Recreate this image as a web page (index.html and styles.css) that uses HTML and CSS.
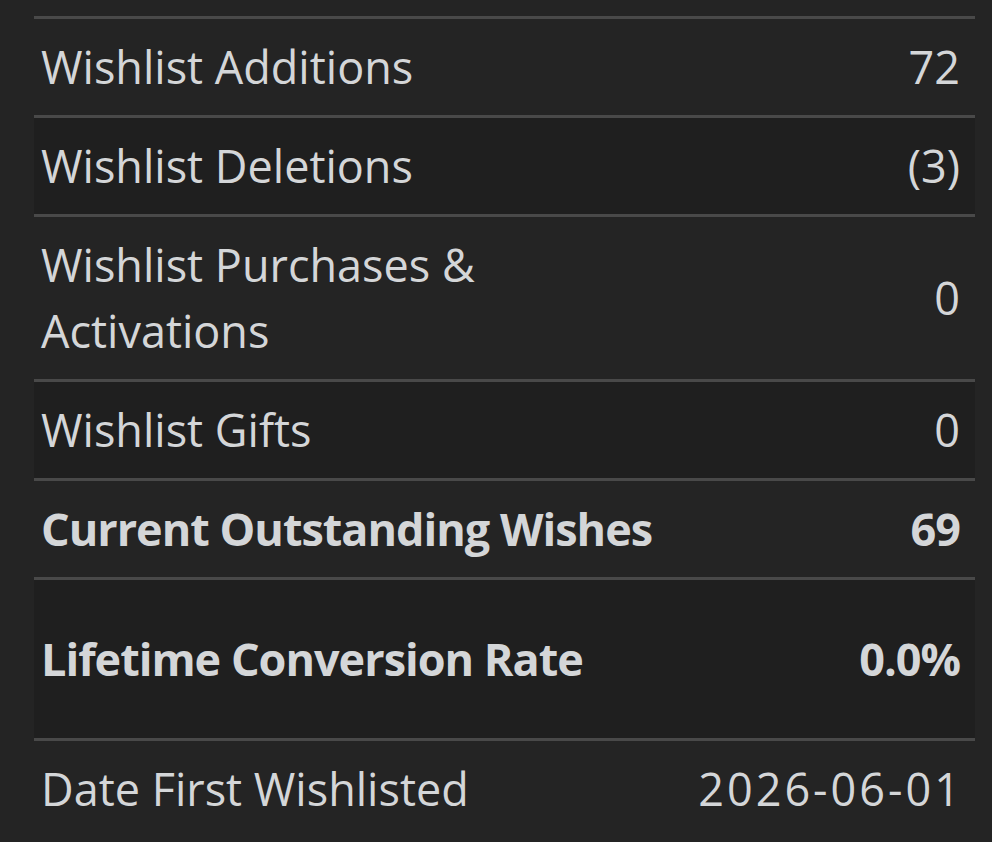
FILE: index.html
```html
<!DOCTYPE html>
<html lang="en">
<head>
    <meta charset="UTF-8">
    <meta name="viewport" content="width=device-width, initial-scale=1.0">
    <title>Wishlist Summary</title>
    <link rel="stylesheet" href="styles.css">
</head>
<body>
    <!-- Wishlist summary rows -->
    <div class="wishlist-panel">
        <div class="wish-row">
            <span class="label">Wishlist Additions</span>
            <span class="num">72</span>
        </div>
        <div class="wish-row alt">
            <span class="label">Wishlist Deletions</span>
            <span class="num">(3)</span>
        </div>
        <div class="wish-row">
            <span class="label wrap">Wishlist Purchases &amp; Activations</span>
            <span class="num">0</span>
        </div>
        <div class="wish-row alt">
            <span class="label">Wishlist Gifts</span>
            <span class="num">0</span>
        </div>
        <div class="wish-row total">
            <span class="label">Current Outstanding Wishes</span>
            <span class="num">69</span>
        </div>
        <div class="wish-row alt total tall">
            <span class="label">Lifetime Conversion Rate</span>
            <span class="num">0.0%</span>
        </div>
        <div class="wish-row">
            <span class="label">Date First Wishlisted</span>
            <span class="num date">2026-06-01</span>
        </div>
    </div>
</body>
</html>
```

FILE: styles.css
```css
/* Global Styles */
body {
    font-family: "Open Sans", "Noto Sans", sans-serif;
    margin: 0;
    padding: 0;
    background-color: #242424;
    color: #d4d6d8;
}

/* Panel */
.wishlist-panel {
    padding: 16px 17px 0 34px;
    font-size: 45px;
    line-height: 66px;
}

.wish-row {
    display: flex;
    justify-content: space-between;
    align-items: center;
    gap: 20px;
    padding: 15px 15px 15px 7px;
    border-top: 3px solid #494949;
}

.wish-row.alt {
    background-color: #1f1f1f;
}

.wish-row .wrap {
    max-width: 470px;
}

.wish-row .num {
    text-align: right;
    white-space: nowrap;
}

.wish-row .date {
    letter-spacing: 3px;
    margin-right: -3px;
}

.wish-row.total {
    font-weight: bold;
    letter-spacing: -1px;
}

.wish-row.tall {
    padding-top: 46px;
    padding-bottom: 46px;
}
```
